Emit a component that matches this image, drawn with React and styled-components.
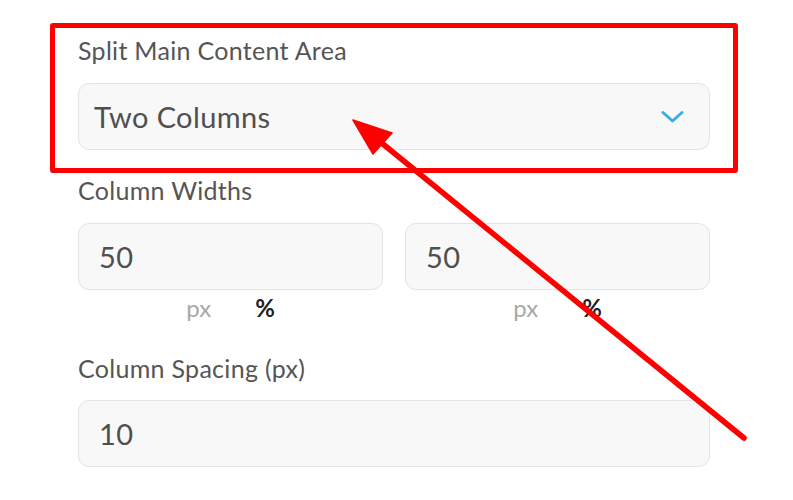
import React, { useState } from 'react';
import styled, { createGlobalStyle } from 'styled-components';

const GlobalStyle = createGlobalStyle`
  html, body {
    margin: 0;
    padding: 0;
    background: #ffffff;
  }
  body {
    font-family: Lato, "Open Sans", "Liberation Sans", sans-serif;
  }
`;

const App = () => {
  const [layout] = useState('Two Columns');
  const [units, setUnits] = useState(['%', '%']);

  const setUnit = (index, unit) => {
    setUnits((prev) => prev.map((u, i) => (i === index ? unit : u)));
  };

  return (
    <Page>
      <GlobalStyle />
      <Panel>
        <Highlight>
          <FieldLabel>Split Main Content Area</FieldLabel>
          <Select>
            <span>{layout}</span>
            <svg width="23" height="14" viewBox="0 0 23 14" fill="none">
              <path d="M2 2.5 L11.5 11 L21 2.5" stroke="#3aaee2" strokeWidth="3" strokeLinecap="round" strokeLinejoin="round" />
            </svg>
          </Select>
        </Highlight>

        <Group>
          <FieldLabel>Column Widths</FieldLabel>
          <WidthGrid>
            {[50, 50].map((value, i) => (
              <WidthColumn key={i}>
                <Input>{value}</Input>
                <UnitToggle>
                  <UnitButton active={units[i] === 'px'} onClick={() => setUnit(i, 'px')}>px</UnitButton>
                  <UnitButton active={units[i] === '%'} onClick={() => setUnit(i, '%')}>%</UnitButton>
                </UnitToggle>
              </WidthColumn>
            ))}
          </WidthGrid>
        </Group>

        <Group spaced>
          <FieldLabel tight>Column Spacing (px)</FieldLabel>
          <Input>10</Input>
        </Group>
      </Panel>

      {/* annotation arrow drawn over the form */}
      <Annotation width="793" height="500" viewBox="0 0 793 500">
        <line x1="744" y1="438" x2="378" y2="140" stroke="#ff0000" strokeWidth="5.5" strokeLinecap="round" />
        <polygon points="353,120 392,133 373,154" fill="#ff0000" stroke="#ff0000" strokeWidth="1.5" strokeLinejoin="round" />
      </Annotation>
    </Page>
  );
};

const Page = styled.div`
  position: relative;
  width: 793px;
  height: 500px;
  overflow: hidden;
  background: #ffffff;
`;

const Panel = styled.div`
  width: 632px;
  padding: 23px 0 0 78px;
  display: flex;
  flex-direction: column;
`;

const Highlight = styled.div`
  margin: 0 -28px;
  padding: 7px 23px 18px;
  border: 5px solid #ff0000;
  border-radius: 3px;
`;

const FieldLabel = styled.div`
  font-size: 25px;
  line-height: 30px;
  letter-spacing: 0.3px;
  color: #555555;
  margin-bottom: ${(props) => (props.tight ? '17px' : '18px')};
`;

const fieldBox = `
  box-sizing: border-box;
  height: 67px;
  background: #f8f8f8;
  border: 1.5px solid #e4e4e4;
  border-radius: 11px;
  display: flex;
  align-items: center;
  font-size: 29px;
  letter-spacing: 0.4px;
  color: #4f4f4f;
`;

const Select = styled.div`
  ${fieldBox}
  justify-content: space-between;
  padding: 0 25px 0 15px;
`;

const Input = styled.div`
  ${fieldBox}
  padding: 0 20px;
`;

const Group = styled.div`
  margin-top: ${(props) => (props.spaced ? '31px' : '2px')};
`;

const WidthGrid = styled.div`
  display: grid;
  grid-template-columns: 1fr 1fr;
  gap: 22px;
`;

const WidthColumn = styled.div`
  display: flex;
  flex-direction: column;
`;

const UnitToggle = styled.div`
  display: flex;
  justify-content: center;
  gap: 44px;
  margin-top: 4px;
`;

const UnitButton = styled.span`
  font-size: 24px;
  line-height: 28px;
  cursor: pointer;
  font-weight: ${(props) => (props.active ? 700 : 400)};
  color: ${(props) => (props.active ? '#222222' : '#a8a8a8')};
`;

const Annotation = styled.svg`
  position: absolute;
  top: 0;
  left: 0;
  pointer-events: none;
`;

export default App;
